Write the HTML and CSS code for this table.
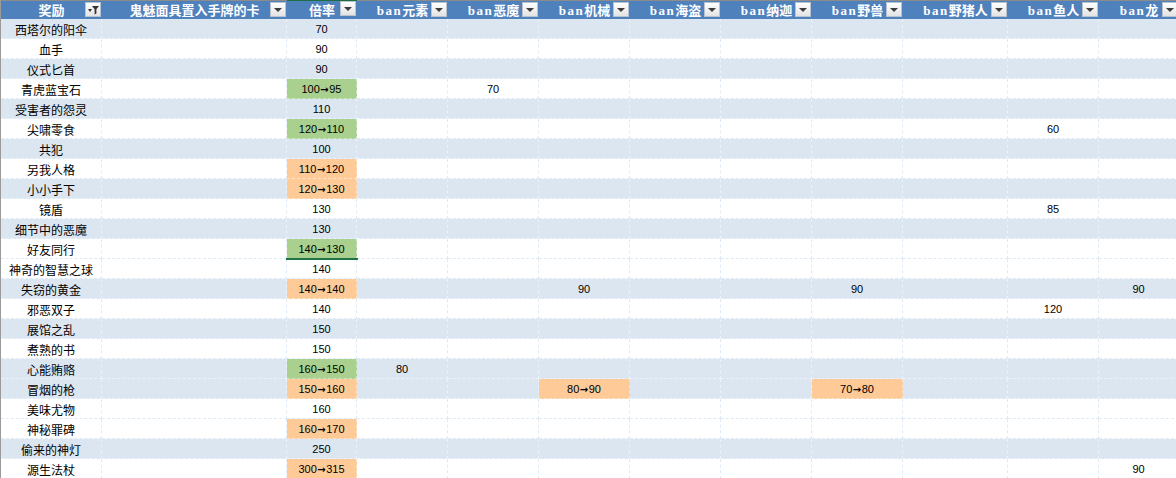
FILE: index.html
```html
<!DOCTYPE html>
<html lang="zh-CN">
<head>
<meta charset="utf-8">
<title>奖励倍率表</title>
<link rel="stylesheet" href="styles.css">
</head>
<body>
<div class="sheet">
  <div class="row head">
    <div class="h">奖励<span class="fb"><svg width="14" height="13" viewBox="0 0 14 13"><path d="M2 6h4l-2 3z" fill="#333"/><path d="M6 3h7l-2.6 3.2v4.3l-1.8 1V6.2z" fill="#333"/></svg></span></div>
    <div class="h">鬼魅面具置入手牌的卡<span class="fb"><i class="tri"></i></span></div>
    <div class="h sel">倍率<span class="fb"><i class="tri"></i></span></div>
    <div class="h"><span class="lat">ban</span>元素<span class="fb"><i class="tri"></i></span></div>
    <div class="h"><span class="lat">ban</span>恶魔<span class="fb"><i class="tri"></i></span></div>
    <div class="h"><span class="lat">ban</span>机械<span class="fb"><i class="tri"></i></span></div>
    <div class="h"><span class="lat">ban</span>海盗<span class="fb"><i class="tri"></i></span></div>
    <div class="h"><span class="lat">ban</span>纳迦<span class="fb"><i class="tri"></i></span></div>
    <div class="h"><span class="lat">ban</span>野兽<span class="fb"><i class="tri"></i></span></div>
    <div class="h"><span class="lat">ban</span>野猪人<span class="fb"><i class="tri"></i></span></div>
    <div class="h"><span class="lat">ban</span>鱼人<span class="fb"><i class="tri"></i></span></div>
    <div class="h"><span class="lat">ban</span>龙<span class="fb"><i class="tri"></i></span></div>
  </div>

  <div class="row b"><div class="c t">西塔尔的阳伞</div><div class="c"></div><div class="c n">70</div><div class="c"></div><div class="c"></div><div class="c"></div><div class="c"></div><div class="c"></div><div class="c"></div><div class="c"></div><div class="c"></div><div class="c"></div></div>
  <div class="row"><div class="c t">血手</div><div class="c"></div><div class="c n">90</div><div class="c"></div><div class="c"></div><div class="c"></div><div class="c"></div><div class="c"></div><div class="c"></div><div class="c"></div><div class="c"></div><div class="c"></div></div>
  <div class="row b"><div class="c t">仪式匕首</div><div class="c"></div><div class="c n">90</div><div class="c"></div><div class="c"></div><div class="c"></div><div class="c"></div><div class="c"></div><div class="c"></div><div class="c"></div><div class="c"></div><div class="c"></div></div>
  <div class="row"><div class="c t">青虎蓝宝石</div><div class="c"></div><div class="c n g">100<span class="ar">→</span>95</div><div class="c"></div><div class="c n">70</div><div class="c"></div><div class="c"></div><div class="c"></div><div class="c"></div><div class="c"></div><div class="c"></div><div class="c"></div></div>
  <div class="row b"><div class="c t">受害者的怨灵</div><div class="c"></div><div class="c n">110</div><div class="c"></div><div class="c"></div><div class="c"></div><div class="c"></div><div class="c"></div><div class="c"></div><div class="c"></div><div class="c"></div><div class="c"></div></div>
  <div class="row"><div class="c t">尖啸零食</div><div class="c"></div><div class="c n g">120<span class="ar">→</span>110</div><div class="c"></div><div class="c"></div><div class="c"></div><div class="c"></div><div class="c"></div><div class="c"></div><div class="c"></div><div class="c n">60</div><div class="c"></div></div>
  <div class="row b"><div class="c t">共犯</div><div class="c"></div><div class="c n">100</div><div class="c"></div><div class="c"></div><div class="c"></div><div class="c"></div><div class="c"></div><div class="c"></div><div class="c"></div><div class="c"></div><div class="c"></div></div>
  <div class="row"><div class="c t">另我人格</div><div class="c"></div><div class="c n o">110<span class="ar">→</span>120</div><div class="c"></div><div class="c"></div><div class="c"></div><div class="c"></div><div class="c"></div><div class="c"></div><div class="c"></div><div class="c"></div><div class="c"></div></div>
  <div class="row b"><div class="c t">小小手下</div><div class="c"></div><div class="c n o">120<span class="ar">→</span>130</div><div class="c"></div><div class="c"></div><div class="c"></div><div class="c"></div><div class="c"></div><div class="c"></div><div class="c"></div><div class="c"></div><div class="c"></div></div>
  <div class="row"><div class="c t">镜盾</div><div class="c"></div><div class="c n">130</div><div class="c"></div><div class="c"></div><div class="c"></div><div class="c"></div><div class="c"></div><div class="c"></div><div class="c"></div><div class="c n">85</div><div class="c"></div></div>
  <div class="row b"><div class="c t">细节中的恶魔</div><div class="c"></div><div class="c n">130</div><div class="c"></div><div class="c"></div><div class="c"></div><div class="c"></div><div class="c"></div><div class="c"></div><div class="c"></div><div class="c"></div><div class="c"></div></div>
  <div class="row"><div class="c t">好友同行</div><div class="c"></div><div class="c n g active">140<span class="ar">→</span>130</div><div class="c"></div><div class="c"></div><div class="c"></div><div class="c"></div><div class="c"></div><div class="c"></div><div class="c"></div><div class="c"></div><div class="c"></div></div>
  <div class="row"><div class="c t">神奇的智慧之球</div><div class="c"></div><div class="c n">140</div><div class="c"></div><div class="c"></div><div class="c"></div><div class="c"></div><div class="c"></div><div class="c"></div><div class="c"></div><div class="c"></div><div class="c"></div></div>
  <div class="row b"><div class="c t">失窃的黄金</div><div class="c"></div><div class="c n o">140<span class="ar">→</span>140</div><div class="c"></div><div class="c"></div><div class="c n">90</div><div class="c"></div><div class="c"></div><div class="c n">90</div><div class="c"></div><div class="c"></div><div class="c n">90</div></div>
  <div class="row"><div class="c t">邪恶双子</div><div class="c"></div><div class="c n">140</div><div class="c"></div><div class="c"></div><div class="c"></div><div class="c"></div><div class="c"></div><div class="c"></div><div class="c"></div><div class="c n">120</div><div class="c"></div></div>
  <div class="row b"><div class="c t">展馆之乱</div><div class="c"></div><div class="c n">150</div><div class="c"></div><div class="c"></div><div class="c"></div><div class="c"></div><div class="c"></div><div class="c"></div><div class="c"></div><div class="c"></div><div class="c"></div></div>
  <div class="row"><div class="c t">煮熟的书</div><div class="c"></div><div class="c n">150</div><div class="c"></div><div class="c"></div><div class="c"></div><div class="c"></div><div class="c"></div><div class="c"></div><div class="c"></div><div class="c"></div><div class="c"></div></div>
  <div class="row b"><div class="c t">心能贿赂</div><div class="c"></div><div class="c n g">160<span class="ar">→</span>150</div><div class="c n">80</div><div class="c"></div><div class="c"></div><div class="c"></div><div class="c"></div><div class="c"></div><div class="c"></div><div class="c"></div><div class="c"></div></div>
  <div class="row b"><div class="c t">冒烟的枪</div><div class="c"></div><div class="c n o">150<span class="ar">→</span>160</div><div class="c"></div><div class="c"></div><div class="c n o">80<span class="ar">→</span>90</div><div class="c"></div><div class="c"></div><div class="c n o">70<span class="ar">→</span>80</div><div class="c"></div><div class="c"></div><div class="c"></div></div>
  <div class="row"><div class="c t">美味尤物</div><div class="c"></div><div class="c n">160</div><div class="c"></div><div class="c"></div><div class="c"></div><div class="c"></div><div class="c"></div><div class="c"></div><div class="c"></div><div class="c"></div><div class="c"></div></div>
  <div class="row"><div class="c t">神秘罪碑</div><div class="c"></div><div class="c n o">160<span class="ar">→</span>170</div><div class="c"></div><div class="c"></div><div class="c"></div><div class="c"></div><div class="c"></div><div class="c"></div><div class="c"></div><div class="c"></div><div class="c"></div></div>
  <div class="row b"><div class="c t">偷来的神灯</div><div class="c"></div><div class="c n">250</div><div class="c"></div><div class="c"></div><div class="c"></div><div class="c"></div><div class="c"></div><div class="c"></div><div class="c"></div><div class="c"></div><div class="c"></div></div>
  <div class="row"><div class="c t">源生法杖</div><div class="c"></div><div class="c n o">300<span class="ar">→</span>315</div><div class="c"></div><div class="c"></div><div class="c"></div><div class="c"></div><div class="c"></div><div class="c"></div><div class="c"></div><div class="c"></div><div class="c n">90</div></div>
</div>
</body>
</html>
```

FILE: styles.css
```css
html, body {
  margin: 0;
  padding: 0;
  background: #ffffff;
  overflow: hidden;
}

.sheet {
  width: 1176px;
  height: 478px;
  overflow: hidden;
  border-left: 1px solid #9a9a9a;
  box-sizing: border-box;
  font-family: "Noto Sans CJK SC", "Liberation Sans", sans-serif;
  color: #000;
}

.row {
  display: grid;
  grid-template-columns: 101px 185px 70px 91px 91px 91px 91px 91px 91px 105px 91px 80px;
  height: 20px;
  background: #ffffff;
}

.row.b {
  background: #dce6f1;
}

.row.head {
  height: 19px;
  background: #4f81bd;
  border-top: 1px solid #8c8c8c;
  box-sizing: border-box;
}

.h {
  position: relative;
  color: #ffffff;
  font-weight: bold;
  font-size: 13px;
  line-height: 18px;
  text-align: center;
  white-space: nowrap;
}

.h.sel {
  box-shadow: inset 0 1px 0 #1e6e43;
  margin-top: -1px;
  padding-top: 1px;
}

.lat {
  font-family: "Liberation Serif", serif;
  font-size: 13px;
  letter-spacing: 1.5px;
}

.fb {
  position: absolute;
  top: 1px;
  right: 1px;
  width: 16px;
  height: 15px;
  box-sizing: border-box;
  border: 1px solid #b9c3cf;
  background: linear-gradient(#ffffff, #e3e3e3);
  display: flex;
  align-items: center;
  justify-content: center;
}

.tri {
  width: 0;
  height: 0;
  border-left: 4px solid transparent;
  border-right: 4px solid transparent;
  border-top: 4px solid #3c3c3c;
  margin-top: 1px;
}

.c {
  box-sizing: border-box;
  height: 20px;
  padding-top: 2px;
  border-right: 1px dashed #deebf7;
  border-bottom: 1px dashed #deebf7;
  font-size: 12px;
  line-height: 17px;
  text-align: center;
  white-space: nowrap;
}

.row.b .c {
  border-color: #eaf2fb;
}

.c.t {
  font-family: "Noto Sans CJK SC", sans-serif;
  font-size: 12px;
}

.c.n {
  font-family: "Liberation Sans", "DejaVu Sans", sans-serif;
  font-size: 11px;
}

.ar {
  font-family: "DejaVu Sans", sans-serif;
  font-size: 10px;
  font-weight: bold;
  margin: 0 0.5px;
}

.c.g {
  background: #a9d08e;
  border-color: rgba(255, 255, 255, 0.45);
}

.c.o {
  background: #fdca98;
  border-color: rgba(255, 255, 255, 0.45);
}

.row.b .c.g,
.row.b .c.o {
  border-color: rgba(255, 255, 255, 0.45);
}

.c.active {
  position: relative;
}

.c.active::after {
  content: "";
  position: absolute;
  left: -1px;
  right: -2px;
  bottom: -2px;
  height: 2px;
  background: #217346;
}
```
